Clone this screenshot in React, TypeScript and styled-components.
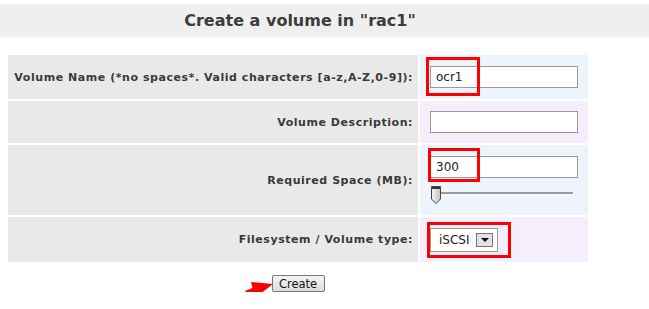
import React from "react";
import styled, { createGlobalStyle } from "styled-components";

const Global = createGlobalStyle`
  html, body { margin: 0; padding: 0; background: #ffffff; }
  body { font-family: "DejaVu Sans", Verdana, sans-serif; color: #333; }
`;

const Page = styled.div`
  padding-top: 4px;
  width: 649px;
`;

const Header = styled.div`
  background: #efefef;
  height: 33px;
  display: flex;
  align-items: center;
`;

const Title = styled.h1`
  margin: 0 0 0 2px;
  width: 596px;
  text-align: center;
  font-family: "DejaVu Sans", Verdana, sans-serif;
  font-weight: bold;
  font-size: 16px;
  color: #3c3c3c;
`;

const Form = styled.div`
  margin: 18px 0 0 8px;
  width: 580px;
  display: grid;
  grid-template-columns: 410px 168px;
  column-gap: 2px;
  row-gap: 2px;
`;

const Label = styled.div<{ $h: number }>`
  height: ${(p) => p.$h}px;
  background: #e9e9e9;
  display: flex;
  align-items: center;
  justify-content: flex-end;
  padding: 0 5px 0 6px;
  box-sizing: border-box;
  font-size: 11px;
  letter-spacing: 0.55px;
  font-weight: bold;
  color: #3a3a3a;
  white-space: nowrap;
`;

const Value = styled.div<{ $alt?: boolean }>`
  position: relative;
  background: ${(p) => (p.$alt ? "#f6eefc" : "#edf4fc")};
  display: flex;
  flex-direction: column;
  justify-content: center;
  align-items: flex-start;
  padding-left: 10px;
  box-sizing: border-box;
`;

const TextInput = styled.div`
  width: 148px;
  height: 22px;
  box-sizing: border-box;
  border: 1px solid #999;
  background: #fff;
  font-family: "DejaVu Sans", Verdana, sans-serif;
  font-size: 12px;
  color: #222;
  display: flex;
  align-items: center;
  padding-left: 5px;
`;

const Slider = styled.div`
  position: relative;
  margin-top: 7px;
  width: 143px;
  height: 20px;
`;

const Track = styled.div`
  position: absolute;
  left: 9px;
  right: 0;
  top: 7px;
  height: 1px;
  border-top: 2px solid #9a9a9a;
  border-bottom: 1px solid #fff;
`;

const Thumb = styled.svg`
  position: absolute;
  left: 0;
  top: 0;
`;

const Select = styled.div`
  width: 68px;
  height: 24px;
  box-sizing: border-box;
  border: 1px solid #999;
  background: #fff;
  display: flex;
  align-items: center;
  justify-content: space-between;
  padding: 0 4px 0 8px;
  font-family: "DejaVu Sans", Verdana, sans-serif;
  font-size: 12px;
  color: #222;
`;

const DropBtn = styled.span`
  width: 17px;
  height: 14px;
  box-sizing: border-box;
  border: 1px solid #777;
  background: #e2e2e2;
  display: flex;
  align-items: center;
  justify-content: center;
`;

const Highlight = styled.div<{ $l: number; $t: number; $w: number; $h: number }>`
  position: absolute;
  left: ${(p) => p.$l}px;
  top: ${(p) => p.$t}px;
  width: ${(p) => p.$w}px;
  height: ${(p) => p.$h}px;
  border: 3px solid #ff0000;
  box-sizing: border-box;
  pointer-events: none;
`;

const Actions = styled.div`
  width: 596px;
  display: flex;
  justify-content: center;
  margin-top: 13px;
`;

const ButtonWrap = styled.div`
  position: relative;
  display: flex;
`;

const Button = styled.button`
  width: 53px;
  height: 17px;
  box-sizing: border-box;
  border: 1px solid #777;
  border-radius: 2px;
  background: linear-gradient(#f4f4f4, #dcdcdc);
  font-family: "DejaVu Sans", Verdana, sans-serif;
  font-size: 11.5px;
  color: #111;
  padding: 0;
  line-height: 14px;
`;

const Arrow = styled.svg`
  position: absolute;
  display: block;
  left: -28px;
  top: 2px;
  width: 29px;
  height: 22px;
  overflow: visible;
  z-index: 1;
`;

export default function App() {
  return (
    <Page>
      <Global />
      <Header>
        <Title>Create a volume in "rac1"</Title>
      </Header>
      <Form>
        <Label $h={44}>Volume Name (*no spaces*. Valid characters [a-z,A-Z,0-9]):</Label>
        <Value>
          <TextInput>ocr1</TextInput>
          <Highlight $l={6} $t={2} $w={54} $h={39} />
        </Value>
        <Label $h={42}>Volume Description:</Label>
        <Value $alt>
          <TextInput />
        </Value>
        <Label $h={70}>Required Space (MB):</Label>
        <Value>
          <TextInput>300</TextInput>
          <Slider>
            <Track />
            <Thumb width="12" height="20" viewBox="0 0 12 20">
              <defs>
                <linearGradient id="tg" x1="0" x2="1" y1="0" y2="0">
                  <stop offset="0" stopColor="#f4f4f4" />
                  <stop offset="1" stopColor="#c4c4c4" />
                </linearGradient>
              </defs>
              <path d="M1.5 1.5 H10.5 V14 L6 18.5 L1.5 14 Z" fill="url(#tg)" stroke="#444" strokeWidth="1" />
              <rect x="2" y="2" width="8" height="2" fill="#333" />
            </Thumb>
          </Slider>
          <Highlight $l={8} $t={3} $w={52} $h={34} />
        </Value>
        <Label $h={45}>Filesystem / Volume type:</Label>
        <Value $alt>
          <Select>
            <span>iSCSI</span>
            <DropBtn>
              <svg width="8" height="4" viewBox="0 0 8 4">
                <path d="M0 0 H8 L4 4 Z" fill="#111" />
              </svg>
            </DropBtn>
          </Select>
          <Highlight $l={7} $t={5} $w={84} $h={36} />
        </Value>
      </Form>
      <Actions>
        <ButtonWrap>
          <Arrow viewBox="0 0 29 22">
            <path d="M7 5 L29 7 L11 21 Z M1 14 L11 10 L12.5 13.5 L2.5 17.5 Z" fill="#ff0000" />
          </Arrow>
          <Button>Create</Button>
        </ButtonWrap>
      </Actions>
    </Page>
  );
}
